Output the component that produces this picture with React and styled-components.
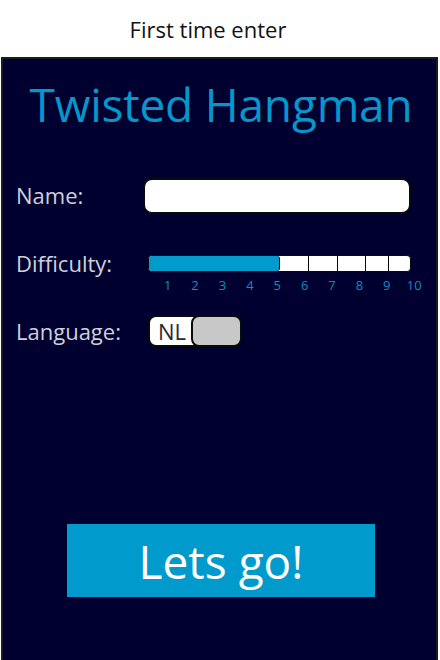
import React, { useState } from "react";
import styled, { createGlobalStyle } from "styled-components";

const GlobalStyle = createGlobalStyle`
    html, body {
        margin: 0;
        padding: 0;
        background: #ffffff;
    }
    body {
        width: 440px;
        height: 660px;
        overflow: hidden;
        font-family: "Open Sans", "Noto Sans", sans-serif;
    }
`;

const levels = [1, 2, 3, 4, 5, 6, 7, 8, 9, 10];
// widths of the bar cells, left to right
const cellWidths = [26, 26, 27, 26, 26, 30, 29, 28, 23, 21];

const App = () => {
    const [level] = useState(5);
    const [lang] = useState("NL");

    return (
        <>
            <GlobalStyle />
            <Header>First time enter</Header>
            <Panel>
                <Title>Twisted Hangman</Title>

                <Row $mt={51} $h={36}>
                    <Label $up={3}>Name:</Label>
                    <NameInput type="text" />
                </Row>

                <Row $mt={39} $h={20}>
                    <Label $up={1}>Difficulty:</Label>
                    <Bar>
                        <Fill style={{ width: cellWidths.slice(0, level).reduce((a, b) => a + b, 0) }} />
                        {cellWidths.slice(level).map((w, i) => (
                            <Cell key={i} style={{ width: w }} />
                        ))}
                    </Bar>
                </Row>
                <Numbers>
                    {levels.map((n) => (
                        <Num key={n}>{n}</Num>
                    ))}
                </Numbers>

                <Row $mt={23} $h={32}>
                    <Label>Language:</Label>
                    <Toggle>
                        <ToggleText>{lang}</ToggleText>
                        <Knob />
                    </Toggle>
                </Row>

                <GoButton>Lets go!</GoButton>
            </Panel>
        </>
    );
};

export default App;

const Header = styled.div`
    height: 57px;
    display: flex;
    align-items: center;
    justify-content: center;
    font-size: 22px;
    color: #111;
    padding-right: 24px;
`;

const Panel = styled.div`
    margin-left: 1px;
    width: 437px;
    height: 603px;
    box-sizing: border-box;
    border: 2px solid #1c1c1c;
    border-bottom: none;
    background: #000030;
    display: flex;
    flex-direction: column;
`;

const Title = styled.h1`
    margin: 22px 0 0 0;
    height: 46px;
    font-weight: 400;
    font-size: 46px;
    line-height: 1;
    color: #0398cb;
    text-align: center;
    letter-spacing: -0.2px;
    padding-left: 3px;
`;

const Row = styled.div`
    display: flex;
    align-items: center;
    height: ${(p) => p.$h}px;
    margin-top: ${(p) => p.$mt}px;
    padding-left: 13px;
`;

const Label = styled.span`
    width: 127px;
    font-size: 22px;
    line-height: 1;
    color: #d0d0da;
    margin-top: ${(p) => -(p.$up || 0)}px;
`;

const NameInput = styled.input`
    width: 268px;
    height: 36px;
    box-sizing: border-box;
    border: 2px solid #0a0a0a;
    border-radius: 9px;
    background: #ffffff;
    outline: none;
    padding: 0 10px;
    margin: 0;
`;

const Bar = styled.div`
    margin-left: 5px;
    display: flex;
    width: 263px;
    height: 17px;
    box-sizing: border-box;
    border: 1px solid #0a0a0a;
    border-radius: 4px;
    overflow: hidden;
    background: #ffffff;
`;

const Fill = styled.div`
    background: #009acc;
    border-right: 1px solid #0a0a0a;
    border-radius: 0 3px 3px 0;
    box-sizing: border-box;
`;

const Cell = styled.div`
    box-sizing: border-box;
    border-right: 1px solid #0a0a0a;
    &:last-child {
        border-right: none;
    }
`;

const Numbers = styled.div`
    display: grid;
    grid-template-columns: repeat(10, 27.4px);
    margin: 5px 0 0 151px;
`;

const Num = styled.span`
    text-align: center;
    font-size: 13px;
    line-height: 14px;
    color: #0a8fc4;
`;

const Toggle = styled.div`
    margin-left: 5px;
    position: relative;
    display: flex;
    align-items: center;
    width: 94px;
    height: 32px;
    box-sizing: border-box;
    border: 2px solid #0a0a0a;
    border-radius: 8px;
    background: #ffffff;
`;

const ToggleText = styled.span`
    font-size: 22px;
    line-height: 1;
    color: #2a2a2a;
    padding-left: 8px;
`;

const Knob = styled.div`
    position: absolute;
    right: -2px;
    top: -2px;
    width: 51px;
    height: 32px;
    box-sizing: border-box;
    border: 2px solid #0a0a0a;
    border-radius: 8px;
    background: #c8c8c8;
`;

const GoButton = styled.button`
    margin: 177px 0 0 64px;
    width: 308px;
    height: 73px;
    border: none;
    background: #009bcc;
    color: #ffffff;
    font-family: "Open Sans", "Noto Sans", sans-serif;
    font-size: 46px;
    padding: 0;
    cursor: pointer;
`;
